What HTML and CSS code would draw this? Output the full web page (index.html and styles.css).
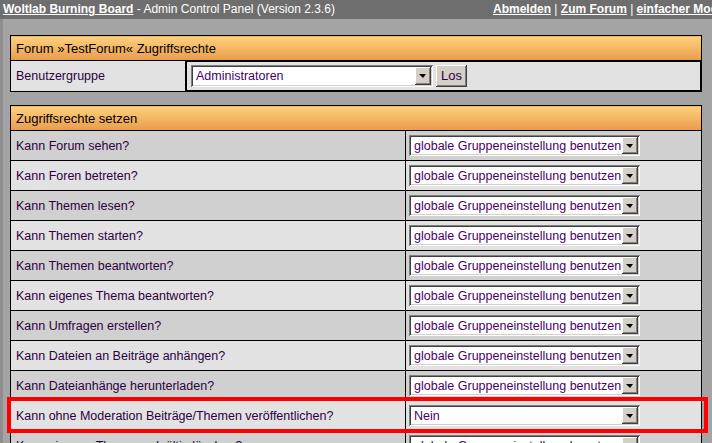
FILE: index.html
```html
<!DOCTYPE html>
<html>
  <head>
    <link rel="stylesheet" href="styles.css">
  </head>
  <body>
    <div class="topbar">
      <div class="brand"><a href="#">Woltlab Burning Board</a> - Admin Control Panel (Version 2.3.6)</div>
      <div class="nav"><a href="#">Abmelden</a> | <a href="#">Zum Forum</a> | <a href="#">einfacher Modus</a></div>
    </div>
    <main class="content">
      <table class="box">
        <tr>
          <th colspan="2">Forum &raquo;TestForum&laquo; Zugriffsrechte</th>
        </tr>
        <tr class="light group">
          <td class="group-label">Benutzergruppe</td>
          <td class="group-field">
            <div class="select wide"><span class="value">Administratoren</span><span class="drop"></span></div>
            <span class="btn">Los</span>
          </td>
        </tr>
      </table>

      <div class="rights">
        <table class="box">
          <tr>
            <th colspan="2">Zugriffsrechte setzen</th>
          </tr>
          <tr class="dark">
            <td class="label">Kann Forum sehen?</td>
            <td class="field"><div class="select"><span class="value">globale Gruppeneinstellung benutzen</span><span class="drop"></span></div></td>
          </tr>
          <tr class="light">
            <td class="label">Kann Foren betreten?</td>
            <td class="field"><div class="select"><span class="value">globale Gruppeneinstellung benutzen</span><span class="drop"></span></div></td>
          </tr>
          <tr class="dark">
            <td class="label">Kann Themen lesen?</td>
            <td class="field"><div class="select"><span class="value">globale Gruppeneinstellung benutzen</span><span class="drop"></span></div></td>
          </tr>
          <tr class="light">
            <td class="label">Kann Themen starten?</td>
            <td class="field"><div class="select"><span class="value">globale Gruppeneinstellung benutzen</span><span class="drop"></span></div></td>
          </tr>
          <tr class="dark">
            <td class="label">Kann Themen beantworten?</td>
            <td class="field"><div class="select"><span class="value">globale Gruppeneinstellung benutzen</span><span class="drop"></span></div></td>
          </tr>
          <tr class="light">
            <td class="label">Kann eigenes Thema beantworten?</td>
            <td class="field"><div class="select"><span class="value">globale Gruppeneinstellung benutzen</span><span class="drop"></span></div></td>
          </tr>
          <tr class="dark">
            <td class="label">Kann Umfragen erstellen?</td>
            <td class="field"><div class="select"><span class="value">globale Gruppeneinstellung benutzen</span><span class="drop"></span></div></td>
          </tr>
          <tr class="light">
            <td class="label">Kann Dateien an Beiträge anhängen?</td>
            <td class="field"><div class="select"><span class="value">globale Gruppeneinstellung benutzen</span><span class="drop"></span></div></td>
          </tr>
          <tr class="dark">
            <td class="label">Kann Dateianhänge herunterladen?</td>
            <td class="field"><div class="select"><span class="value">globale Gruppeneinstellung benutzen</span><span class="drop"></span></div></td>
          </tr>
          <tr class="light">
            <td class="label">Kann ohne Moderation Beiträge/Themen veröffentlichen?</td>
            <td class="field"><div class="select"><span class="value">Nein</span><span class="drop"></span></div></td>
          </tr>
          <tr class="dark">
            <td class="label">Kann eigenes Thema endgültig löschen?</td>
            <td class="field"><div class="select"><span class="value">globale Gruppeneinstellung benutzen</span><span class="drop"></span></div></td>
          </tr>
        </table>
        <div class="mark"></div>
      </div>
    </main>
  </body>
</html>
```

FILE: styles.css
```css
* {
  margin: 0;
  padding: 0;
  box-sizing: border-box;
}

body {
  background: #a4a4a4;
  font-family: "Liberation Sans", Arial, sans-serif;
  font-size: 12.5px;
  color: #2e0042;
  width: 712px;
  height: 443px;
  overflow: hidden;
}

.topbar {
  display: flex;
  height: 19px;
  line-height: 19px;
  font-size: 12px;
  background: #6e6e6e;
  color: #fff;
  padding-left: 3px;
  white-space: nowrap;
  overflow: hidden;
}

.topbar a {
  color: #fff;
  font-weight: bold;
  text-decoration: underline;
}

.brand {
  flex: 0 0 490px;
}

.nav {
  flex: 0 0 auto;
}

.content {
  padding: 16px 0 0 7px;
  border-left: 3px solid #8e8e8e;
}

.box {
  width: 692px;
  border-collapse: collapse;
  border: 1px solid #000;
}

.box th {
  height: 25px;
  text-align: left;
  padding: 0 5px;
  font-size: 13px;
  font-weight: normal;
  color: #000;
  border: 1px solid #000;
  background: linear-gradient(#ffd17e, #e89c4b);
}

.box td {
  height: 30px;
  padding: 0 5px;
  border: 1px solid #000;
  vertical-align: middle;
  white-space: nowrap;
}

.light td {
  background: #e2e2e2;
}

.dark td {
  background: #cfd0cf;
}

.group-label {
  width: 175px;
}

.box td.group-field {
  display: flex;
  align-items: center;
  gap: 3px;
  padding-left: 4px;
}

.label {
  width: 395px;
}

.box td.field {
  padding-left: 3px;
}

.rights {
  position: relative;
  margin-top: 13px;
}

.select {
  display: flex;
  align-items: center;
  width: 231px;
  height: 21px;
  padding: 2px;
  background: #fff;
  color: #4a0068;
  box-shadow: inset 1px 1px #808080, inset -1px -1px #fff, inset 2px 2px #404040, inset -2px -2px #d4d0c8;
}

.select.wide {
  width: 242px;
  height: 22px;
}

.value {
  flex: 1;
  padding-left: 3px;
  overflow: hidden;
  white-space: nowrap;
}

.drop {
  position: relative;
  width: 16px;
  height: 100%;
  background: #d4d0c8;
  box-shadow: inset -1px -1px #404040, inset 1px 1px #fff, inset -2px -2px #808080;
}

.drop:after {
  content: "";
  position: absolute;
  left: 4px;
  top: 7px;
  border-top: 4px solid #000;
  border-left: 4px solid transparent;
  border-right: 3px solid transparent;
}

.btn {
  display: inline-block;
  width: 31px;
  height: 22px;
  line-height: 22px;
  font-size: 13px;
  text-align: center;
  background: #d4d0c8;
  color: #2e0042;
  box-shadow: inset -1px -1px #404040, inset 1px 1px #fff, inset -2px -2px #808080;
}

.mark {
  position: absolute;
  left: -3px;
  top: 292px;
  width: 701px;
  height: 36px;
  border: 4px solid #ff0000;
}
```
